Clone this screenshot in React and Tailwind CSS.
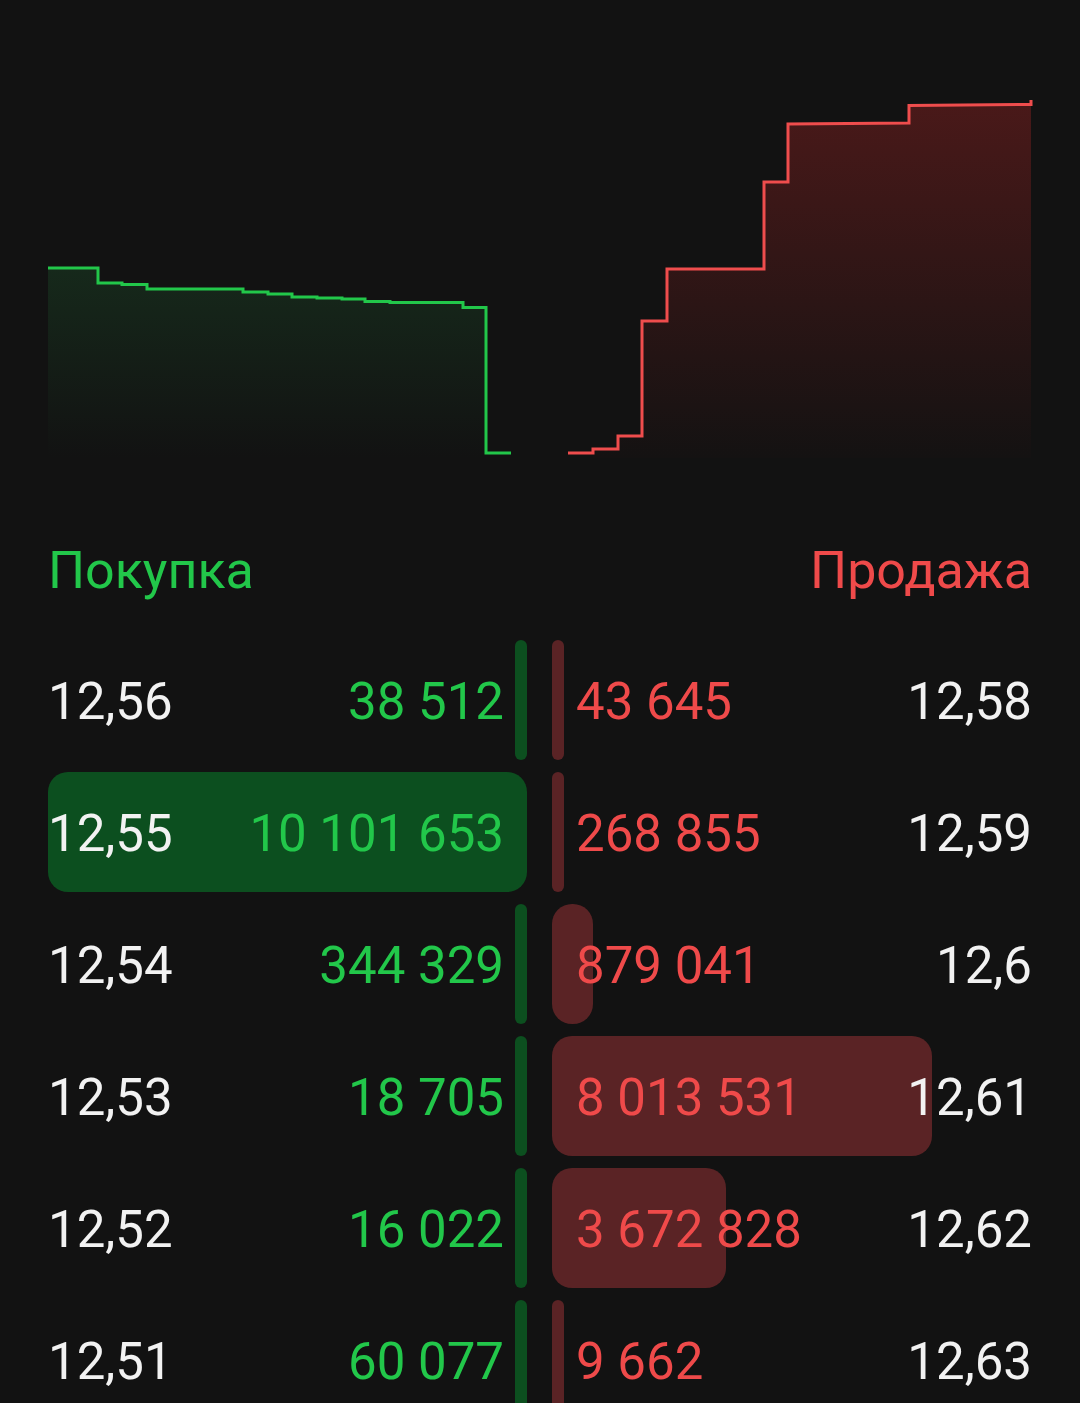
import React from 'react';

const bids = [
  { price: '12,56', volume: '38 512', bar: 12 },
  { price: '12,55', volume: '10 101 653', bar: 479 },
  { price: '12,54', volume: '344 329', bar: 12 },
  { price: '12,53', volume: '18 705', bar: 12 },
  { price: '12,52', volume: '16 022', bar: 12 },
  { price: '12,51', volume: '60 077', bar: 12 },
];

const asks = [
  { price: '12,58', volume: '43 645', bar: 12 },
  { price: '12,59', volume: '268 855', bar: 12 },
  { price: '12,6', volume: '879 041', bar: 41 },
  { price: '12,61', volume: '8 013 531', bar: 380 },
  { price: '12,62', volume: '3 672 828', bar: 174 },
  { price: '12,63', volume: '9 662', bar: 12 },
];

const greenLine = [
  [48, 268], [98, 268], [98, 283], [122, 283], [122, 284.5], [147, 284.5], [147, 289],
  [243, 289], [243, 292], [268, 292], [268, 294], [292, 294], [292, 297], [317, 297],
  [317, 298], [342, 298], [342, 299], [365, 299], [365, 301.5], [390, 301.5], [390, 302.5],
  [463, 302.5], [463, 307.5], [486, 307.5], [486, 453], [511, 453],
];

const redLine = [
  [568, 453], [593, 453], [593, 449], [618, 449], [618, 436], [642, 436], [642, 321],
  [667, 321], [667, 269], [764, 269], [764, 182], [788, 182], [788, 124], [909, 123],
  [909, 105.5], [1031, 104.5], [1031, 100],
];

const toPath = (pts) => pts.map(([x, y], i) => `${i ? 'L' : 'M'}${x} ${y}`).join(' ');

const DepthChart = () => (
  <svg width="1080" height="500" viewBox="0 0 1080 500" className="block">
    <defs>
      <linearGradient id="gFill" x1="0" y1="0" x2="0" y2="1" gradientUnits="objectBoundingBox">
        <stop offset="0" stopColor="#16291b" />
        <stop offset="1" stopColor="#121212" />
      </linearGradient>
      <linearGradient id="rFill" x1="0" y1="0" x2="0" y2="1" gradientUnits="objectBoundingBox">
        <stop offset="0" stopColor="#4a1919" />
        <stop offset="1" stopColor="#141212" />
      </linearGradient>
    </defs>
    <path d={`${toPath(greenLine.slice(0, -1))} L486 458 L48 458 Z`} fill="url(#gFill)" />
    <path d={`M642 436 ${toPath(redLine.slice(6)).replace('M', 'L')} L1031 458 L593 458 L593 449 L618 449 L618 436 Z`} fill="url(#rFill)" />
    <path d={toPath(greenLine)} fill="none" stroke="#22c74a" strokeWidth="3" />
    <path d={toPath(redLine)} fill="none" stroke="#ef4d4d" strokeWidth="3" />
  </svg>
);

const BidRow = ({ row }) => (
  <div className="relative h-[120px] flex items-center justify-between">
    <div
      className="absolute right-0 top-0 h-full bg-[#0c4f1f]"
      style={{ width: row.bar, borderRadius: row.bar > 12 ? 20 : 6 }}
    />
    <span className="relative pt-[3px] text-[#f2f2f2]">{row.price}</span>
    <span className="relative pt-[3px] pr-[23px] text-[#22c74a]">{row.volume}</span>
  </div>
);

const AskRow = ({ row }) => (
  <div className="relative h-[120px] flex items-center justify-between">
    <div
      className="absolute left-0 top-0 h-full bg-[#5a2325]"
      style={{ width: row.bar, borderRadius: row.bar > 12 ? 20 : 6 }}
    />
    <span className="relative pt-[3px] pl-[24px] text-[#ef4a4a]">{row.volume}</span>
    <span className="relative pt-[3px] text-[#f2f2f2]">{row.price}</span>
  </div>
);

export default function App() {
  return (
    <div className="h-[1403px] w-[1080px] overflow-hidden bg-[#121212] font-['Roboto',sans-serif]">
      <DepthChart />

      <div className="mt-[45px] px-[48px] flex justify-between text-[52px] leading-[52px]">
        <span className="text-[#22c74a]">Покупка</span>
        <span className="text-[#ef4a4a]">Продажа</span>
      </div>

      <div className="mt-[43px] px-[48px] flex gap-[25px] text-[51px] leading-[51px]">
        <div className="w-[479px] flex flex-col gap-[12px]">
          {bids.map((row) => (
            <BidRow key={row.price} row={row} />
          ))}
        </div>
        <div className="flex-1 flex flex-col gap-[12px]">
          {asks.map((row) => (
            <AskRow key={row.price} row={row} />
          ))}
        </div>
      </div>
    </div>
  );
}
